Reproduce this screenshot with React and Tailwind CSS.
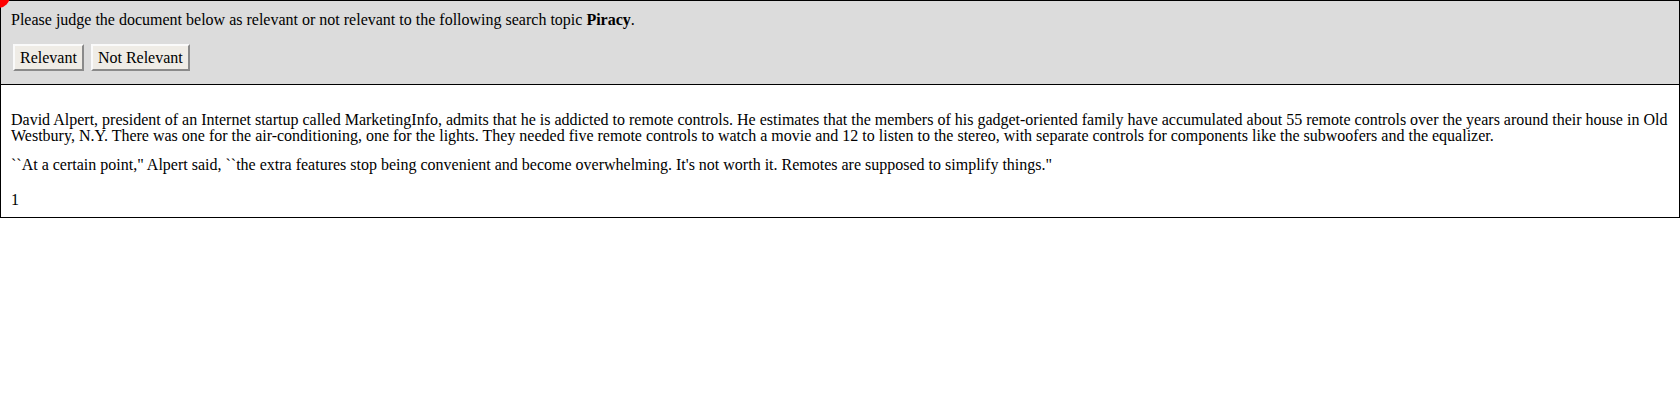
export default function App() {
  return (
    <div className="relative w-[1680px] font-['Liberation_Serif',serif] text-[16px] leading-[16px] text-black">
      <div className="border border-black bg-[#dcdcdc] px-[10px] pt-[10px] h-[85px]">
        <p className="leading-[17px]">
          Please judge the document below as relevant or not relevant to the following search topic <b>Piracy</b>.
        </p>
        <div className="mt-[16px] flex gap-[7px] pl-[2px]">
          <button className="h-[27px] border-2 border-t-[#fafafa] border-l-[#fafafa] border-r-[#8a8a8a] border-b-[#8a8a8a] bg-[#efece6] px-[5px] leading-[20px]">
            Relevant
          </button>
          <button className="h-[27px] border-2 border-t-[#fafafa] border-l-[#fafafa] border-r-[#8a8a8a] border-b-[#8a8a8a] bg-[#efece6] px-[5px] leading-[20px]">
            Not Relevant
          </button>
        </div>
      </div>
      <div className="border border-t-0 border-black bg-white px-[10px] pt-[27px] h-[133px]">
        <p>
          David Alpert, president of an Internet startup called MarketingInfo, admits that he is addicted to remote controls. He estimates that the members of his gadget-oriented family have accumulated about 55 remote controls over the years around their house in Old Westbury, N.Y. There was one for the air-conditioning, one for the lights. They needed five remote controls to watch a movie and 12 to listen to the stereo, with separate controls for components like the subwoofers and the equalizer.
        </p>
        <p className="mt-[13px]">
          ``At a certain point," Alpert said, ``the extra features stop being convenient and become overwhelming. It's not worth it. Remotes are supposed to simplify things."
        </p>
        <p className="mt-[19px]">1</p>
      </div>
      <div className="absolute left-[-14px] top-[-16px] z-10 h-[24px] w-[24px] rounded-full bg-[#ff0000]" />
    </div>
  )
}
